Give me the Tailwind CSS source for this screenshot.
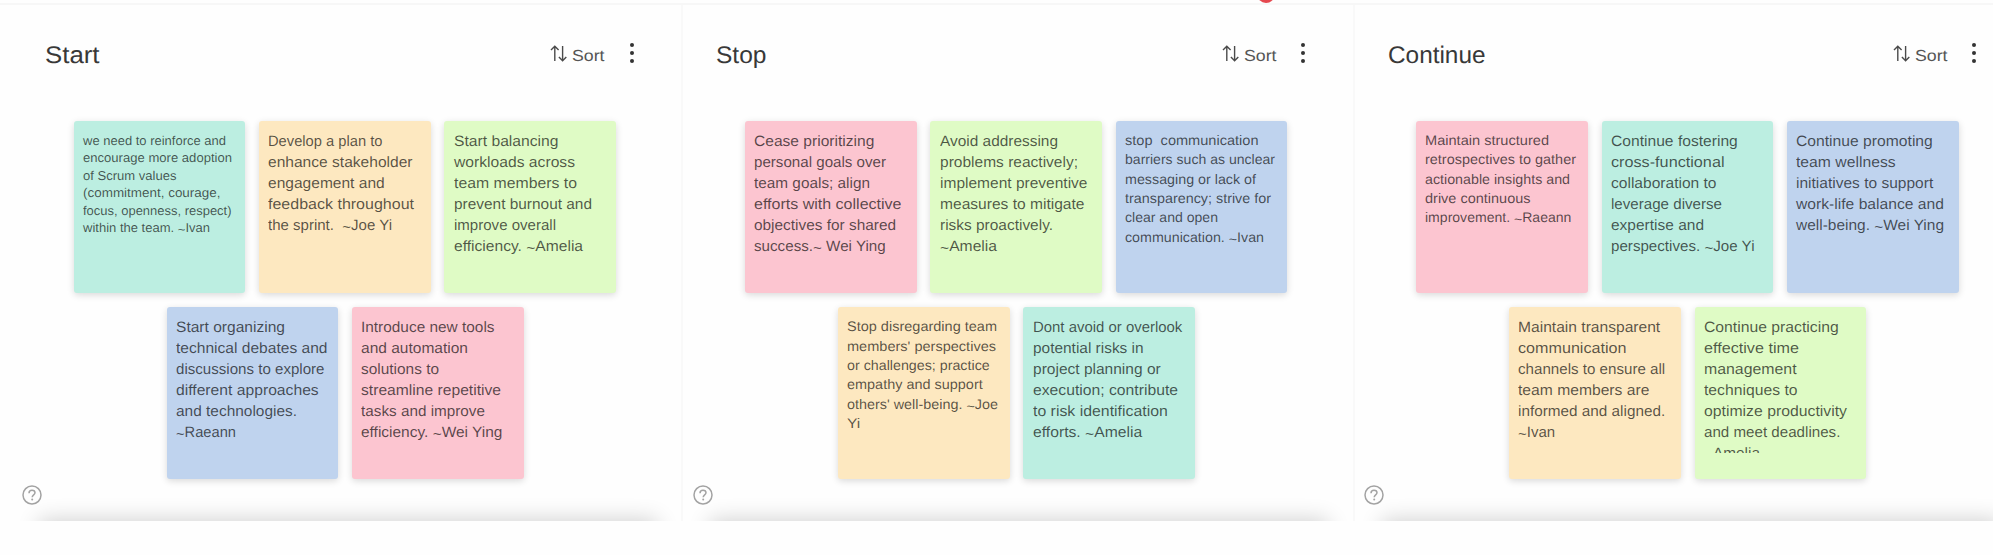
<!DOCTYPE html>
<html lang="en">
<head>
<meta charset="utf-8">
<title>Start Stop Continue</title>
<script src="https://cdn.jsdelivr.net/npm/@tailwindcss/browser@4"></script>
</head>
<body class="w-[1993px] h-[555px] overflow-hidden bg-[#fefefe] font-['Liberation_Sans',Arial,sans-serif] [text-rendering:geometricPrecision]">
<svg width="0" height="0" class="absolute">
  <symbol id="sort" viewBox="0 0 17 17"><path d="M4.8 16V1.2M1 5L4.8 1.2 8.6 5M12.6 1v14.8M8.9 12l3.7 3.8 3.7-3.8" fill="none" stroke="#4a4a4a" stroke-width="1.4"/></symbol>
  <symbol id="dots" viewBox="0 0 6 22"><g fill="#333"><circle cx="3" cy="3" r="2"/><circle cx="3" cy="11" r="2"/><circle cx="3" cy="19" r="2"/></g></symbol>
  <symbol id="help" viewBox="0 0 20 20"><g fill="none" stroke="#a3a3a3" stroke-width="1.5"><circle cx="10" cy="10" r="9"/><path d="M7 8.2C7 6.200 8.300 5.200 10 5.200S13 6.200 13 7.800C13 9.800 10.200 10 10.200 12.200"/></g><circle cx="10.200" cy="14.600" r="1" fill="#a3a3a3"/></symbol>
</svg>
<div class="relative h-[520.5px] w-[2030px] overflow-hidden bg-[#fefefe]">
  <div class="h-[3px]"></div>
  <div class="h-[2px] bg-[#f7f7f7]"></div>
  <div class="absolute left-[1256.500px] top-[-15px] h-[18px] w-[18px] rounded-full bg-[#e5484f]"></div>
  <main id="board" class="flex h-[516px] pl-[12px]"></main>
</div>
<script>
const C = {
  mint: 'bg-[#bceee1]', sand: 'bg-[#fde8c0]', lime: 'bg-[#dffbc5]', sky: 'bg-[#bfd3ee]', rose: 'bg-[#fcc5d0]'
};
const S = {
  s: 'text-[12.8px] leading-[17.5px] pt-[10.9px]',
  m: 'text-[13.9px] leading-[19.4px] pt-[9.8px]',
  l: 'text-[15px] leading-[20.9px] pt-[11px]'
};
const SIZE = { s: 12.8, m: 13.9, l: 15 };
// Each note: colour, text size, lines as [text, width in px]
const columns = [
  ['Start', [
    ['mint','s',[['we need to reinforce and',142],['encourage more adoption',148],['of Scrum values',92.5],['(commitment, courage,',136.5],['focus, openness, respect)',147.5],['within the team. ~Ivan',126]]],
    ['sand','l',[['Develop a plan to',113.5],['enhance stakeholder',143.5],['engagement and',115.7],['feedback throughout',145],['the sprint.  ~Joe Yi',123]]],
    ['lime','l',[['Start balancing',103.5],['workloads across',120],['team members to',122],['prevent burnout and',137],['improve overall',101],['efficiency. ~Amelia',128]]],
    ['sky','l',[['Start organizing',108],['technical debates and',150.5],['discussions to explore',147.5],['different approaches',141.7],['and technologies.',120],['~Raeann',59]]],
    ['rose','l',[['Introduce new tools',132.5],['and automation',106],['solutions to',77],['streamline repetitive',139],['tasks and improve',123],['efficiency. ~Wei Ying',140.4]]]
  ]],
  ['Stop', [
    ['rose','l',[['Cease prioritizing',119.3],['personal goals over',131],['team goals; align',115],['efforts with collective',146.5],['objectives for shared',141],['success.~ Wei Ying',130.7]]],
    ['lime','l',[['Avoid addressing',117],['problems reactively;',137],['implement preventive',146.5],['measures to mitigate',143.5],['risks proactively.',112],['~Amelia',56]]],
    ['sky','m',[['stop  communication',132.5],['barriers such as unclear',149],['messaging or lack of',130],['transparency; strive for',145],['clear and open',92],['communication. ~Ivan',138]]],
    ['sand','m',[['Stop disregarding team',149],["members' perspectives",148],['or challenges; practice',141.7],['empathy and support',134.7],["others' well-being. ~Joe",150],['Yi',12.3]]],
    ['mint','l',[['Dont avoid or overlook',148.3],['potential risks in',109.6],['project planning or',126.7],['execution; contribute',144],['to risk identification',133.8],['efforts. ~Amelia',108.3]]]
  ]],
  ['Continue', [
    ['rose','m',[['Maintain structured',123],['retrospectives to gather',150],['actionable insights and',144],['drive continuous',104.5],['improvement. ~Raeann',145.4]]],
    ['mint','l',[['Continue fostering',125.8],['cross-functional',112.5],['collaboration to',104.5],['leverage diverse',110],['expertise and',92],['perspectives. ~Joe Yi',142.5]]],
    ['sky','l',[['Continue promoting',135.8],['team wellness',98.7],['initiatives to support',136.2],['work-life balance and',147],['well-being. ~Wei Ying',147]]],
    ['sand','l',[['Maintain transparent',141.2],['communication',107.5],['channels to ensure all',146.2],['team members are',130.4],['informed and aligned.',146.2],['~Ivan',36.2]]],
    ['lime','l',[['Continue practicing',133.7],['effective time',94],['management',91.6],['techniques to',92.5],['optimize productivity',142],['and meet deadlines.',135.4],['~Amelia',55]]]
  ]]
];
const pen = document.createElement('canvas').getContext('2d');
pen.textRendering = 'geometricPrecision';
// Horizontal stretch that makes a line of the given font size fill its width
const fit = (text, width, size) => {
  pen.font = size + 'px "Liberation Sans"';
  return `transform:scaleX(${(width + 1) / pen.measureText(text).width})`;
};
const tilde = t => t.replace('~', '<span class="align-[-1.5px] leading-none">~</span>');
const note = ([c, s, lines]) => `<article class="h-[171.8px] w-[171.600px] shrink-0 rounded-[3px] shadow-[0_2px_7px_rgba(0,0,0,0.15)] ${C[c]}"><div class="h-[145.5px] overflow-hidden pl-[9.2px] text-black/66 ${S[s]}">${lines.map(([t, w]) => `<div class="flex"><span class="block origin-left whitespace-pre" style="${fit(t, w, SIZE[s])}">${tilde(t)}</span></div>`).join('')}</div></article>`;
document.getElementById('board').innerHTML = columns.map(([title, n]) => `
<section class="relative flex h-full w-[671.3px] shrink-0 flex-col border-r-2 border-[#f9f9f9]">
  <header class="flex h-[116px] items-start justify-between pl-[33px] pr-[46.5px] pt-[36px]">
    <h2 class="flex pt-px text-[24px] leading-[28px] text-[#383838]"><span class="block origin-left whitespace-pre" style="${fit(title, {Start: 53.5, Stop: 49.5, Continue: 96.5}[title], 24)}">${title}</span></h2>
    <div class="flex items-start text-[#555]">
      <svg class="mt-[4px] h-[17px] w-[17px]"><use href="#sort"/></svg>
      <div class="ml-[5px] mt-[6px] flex w-[32px] text-[16px] leading-[20px]"><span class="block origin-left whitespace-pre" style="${fit('Sort', 31.5, 16)}">Sort</span></div>
      <svg class="ml-[24.5px] mt-[1px] h-[22px] w-[6px]"><use href="#dots"/></svg>
    </div>
  </header>
  <div class="flex gap-[13.8px] pl-[61.7px]">${n.slice(0, 3).map(note).join('')}</div>
  <div class="mt-[14.500px] flex gap-[13.8px] pl-[154.7px]">${n.slice(3).map(note).join('')}</div>
  <svg class="absolute left-[9.8px] top-[479.700px] h-[20px] w-[20px]"><use href="#help"/></svg>
  <div class="absolute left-[31px] top-[519px] h-[20px] w-[610px] shadow-[0_0_22px_4px_rgba(0,0,0,0.19)]"></div>
</section>`).join('');
</script>
</body>
</html>
